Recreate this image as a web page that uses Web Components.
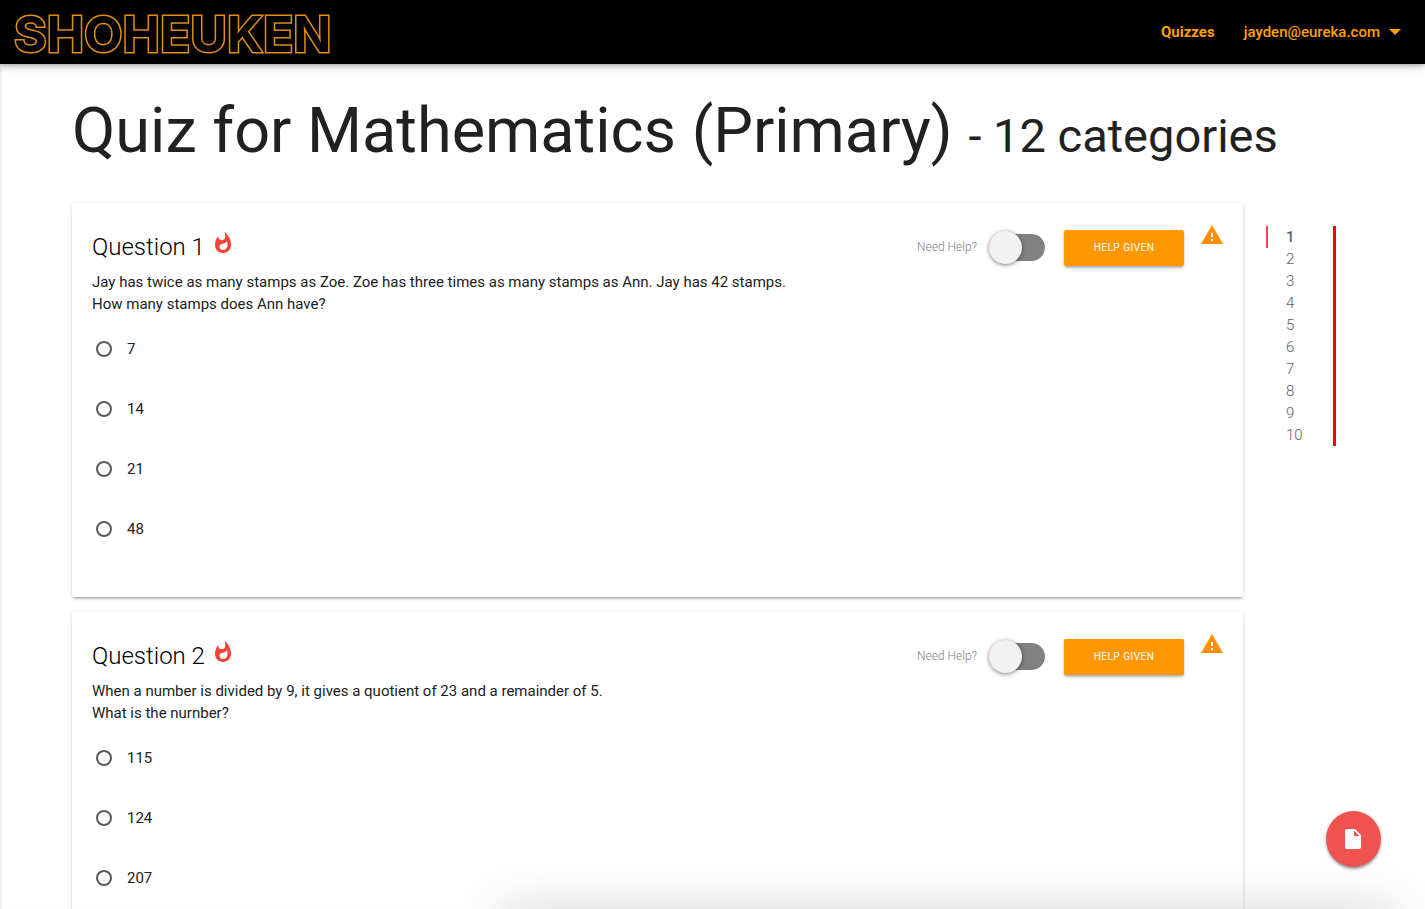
<!DOCTYPE html>
<html lang="en">
<head>
<meta charset="utf-8">
<meta name="viewport" content="width=device-width, initial-scale=1">
<title>Quiz for Mathematics (Primary)</title>
<style>
  html { font-family: Roboto, "Liberation Sans", sans-serif; font-size: 15px; line-height: 22px; color: #212121; background: #fff; }
  body { margin: 0; overflow-x: hidden; }
</style>
</head>
<body>
<quiz-header user="jayden@eureka.com"></quiz-header>
<quiz-page>
  <span slot="title">Quiz for Mathematics (Primary)</span>
  <span slot="note">- 12 categories</span>
  <quiz-question number="1" options="7,14,21,48">Jay has twice as many stamps as Zoe. Zoe has three times as many stamps as Ann. Jay has 42 stamps.<br>How many stamps does Ann have?</quiz-question>
  <quiz-question number="2" options="115,124,207">When a number is divided by 9, it gives a quotient of 23 and a remainder of 5.<br>What is the nurnber?</quiz-question>
  <quiz-contents slot="aside" count="10" active="1"></quiz-contents>
</quiz-page>
<window-shade></window-shade>
<floating-action label="Submit quiz"></floating-action>

<script>
const define = (name, html, setup) => {
  const template = document.createElement('template');
  template.innerHTML = html;
  customElements.define(name, class extends HTMLElement {
    constructor() {
      super();
      this.attachShadow({ mode: 'open' }).append(template.content.cloneNode(true));
    }
    connectedCallback() {
      if (setup && !this.ready) { this.ready = true; setup(this, this.shadowRoot); }
    }
  });
};

define('quiz-header', `
  <style>
    :host { display: block; position: relative; background: #000; color: #ffa000; box-shadow: 0 2px 5px rgba(0,0,0,.26), 0 2px 10px rgba(0,0,0,.12); }
    header { display: flex; align-items: center; justify-content: space-between; height: 64px; padding: 0 24px 0 14px; }
    a { color: inherit; text-decoration: none; }
    .logo { font: 700 50px/64px Inter, sans-serif; color: #000; -webkit-text-stroke: 3px #e08e0b; paint-order: stroke fill; padding-top: 4px; }
    nav { display: flex; align-items: center; gap: 29px; }
    .current { font-weight: 700; }
    .user { display: flex; align-items: center; gap: 9px; font-weight: 500; }
    svg { display: block; width: 12px; height: 6px; }
  </style>
  <header>
    <a class="logo" href="#">SHOHEUKEN</a>
    <nav>
      <a class="current" href="#">Quizzes</a>
      <a class="user" href="#"><span></span><svg viewBox="0 0 12 6" aria-hidden="true"><path d="M0 0h12L6 6z" fill="currentColor"/></svg></a>
    </nav>
  </header>`, (el, root) => { root.querySelector('.user span').textContent = el.getAttribute('user'); });

define('quiz-page', `
  <style>
    :host { display: block; padding: 0 72px; }
    h1 { margin: 32px 0; font-size: 63px; line-height: 70px; font-weight: 400; white-space: nowrap; }
    small { font-size: 47px; }
    .body { display: grid; grid-template-columns: minmax(0, 1fr) 87px; gap: 23px; align-items: start; }
    main { display: flex; flex-direction: column; gap: 15px; }
  </style>
  <h1><slot name="title"></slot> <small><slot name="note"></slot></small></h1>
  <div class="body">
    <main><slot></slot></main>
    <slot name="aside"></slot>
  </div>`);

define('quiz-question', `
  <style>
    :host { display: block; border-radius: 2px; background: #fff; padding: 20px 19px 38px 20px; box-shadow: 0 2px 2px rgba(0,0,0,.14), 0 1px 5px rgba(0,0,0,.12), 0 3px 2px -2px rgba(0,0,0,.16); }
    .top { display: flex; align-items: flex-start; height: 48px; }
    h2 { margin: 0 auto 0 0; display: flex; gap: 6px; font-size: 24px; line-height: 48px; font-weight: 300; color: #000; }
    svg { display: block; width: 24px; height: 24px; }
    .fire { margin-top: 8px; fill: #f44336; }
    .warn { fill: #ff8f00; }
    label.help { display: flex; align-items: center; gap: 12px; height: 48px; font-size: 12px; font-weight: 300; color: #808080; }
    .help input { appearance: none; display: flex; align-items: center; margin: 0; width: 56px; height: 27px; border-radius: 14px; background: linear-gradient(#818181, #818181) right / 40px 100% no-repeat; }
    .help input::before { content: ""; width: 33px; height: 33px; flex: none; border-radius: 50%; background: #f1f1f1; box-shadow: 0 1px 4px rgba(0,0,0,.5); }
    button { margin: 7px 16px 0 19px; border: 0; width: 120px; height: 36px; border-radius: 2px; padding: 0; background: #ff9800; color: #fff; font: 400 10px/36px Roboto, sans-serif; letter-spacing: .5px; text-transform: uppercase; box-shadow: 0 2px 2px rgba(0,0,0,.14), 0 1px 5px rgba(0,0,0,.12), 0 3px 3px -2px rgba(0,0,0,.2); }
    p { margin: 0 0 4px; }
    fieldset { margin: 0; border: 0; padding: 0; }
    .option { display: flex; align-items: center; gap: 15px; height: 60px; padding-left: 4px; }
    .option input { appearance: none; margin: 0; box-sizing: border-box; width: 16px; height: 16px; border: 2px solid #5a5a5a; border-radius: 50%; }
    .option input:checked { border-width: 5px; }
  </style>
  <div class="top">
    <h2><span></span><svg class="fire" viewBox="0 0 24 24" aria-hidden="true"><path d="M13.5.67s.74 2.65.74 4.8c0 2.06-1.35 3.73-3.41 3.73-2.07 0-3.63-1.67-3.63-3.73l.03-.36C5.21 7.51 4 10.62 4 14c0 4.42 3.58 8 8 8s8-3.58 8-8C20 8.61 17.41 3.8 13.5.67zM11.71 19c-1.78 0-3.22-1.4-3.22-3.14 0-1.62 1.05-2.76 2.81-3.12 1.77-.36 3.6-1.21 4.62-2.58.39 1.29.59 2.65.59 4.04 0 2.65-2.15 4.8-4.8 4.8z"/></svg></h2>
    <label class="help"><span>Need Help?</span><input type="checkbox" role="switch"></label>
    <button type="button">Help given</button>
    <svg class="warn" viewBox="0 0 24 24" aria-hidden="true"><path d="M1 21h22L12 2 1 21zm12-3h-2v-2h2v2zm0-4h-2v-4h2v4z"/></svg>
  </div>
  <p><slot></slot></p>
  <fieldset></fieldset>`, (el, root) => {
    const number = el.getAttribute('number');
    root.querySelector('h2 span').textContent = 'Question ' + number;
    const set = root.querySelector('fieldset');
    set.setAttribute('aria-label', 'Answers to question ' + number);
    for (const text of el.getAttribute('options').split(',')) {
      const label = document.createElement('label');
      label.className = 'option';
      const input = document.createElement('input');
      input.type = 'radio'; input.name = 'q' + number; input.value = text;
      label.append(input, text);
      set.append(label);
    }
  });

define('quiz-contents', `
  <style>
    :host { display: block; padding-top: 23px; }
    ul { list-style: none; margin: 0; padding: 0; width: 67px; border-right: 3px solid #f00; }
    a { display: block; padding-left: 20px; color: #606060; text-decoration: none; font-weight: 300; }
    a.active { padding-left: 18px; border-left: 2px solid #ea4a4f; font-weight: 500; }
  </style>
  <nav aria-label="Questions"><ul></ul></nav>`, (el, root) => {
    for (let i = 1; i <= Number(el.getAttribute('count')); i++) {
      const item = document.createElement('li');
      const link = document.createElement('a');
      link.href = '#question-' + i; link.textContent = i;
      link.classList.toggle('active', String(i) === el.getAttribute('active'));
      item.append(link);
      root.querySelector('ul').append(item);
    }
  });

define('floating-action', `
  <style>
    :host { position: fixed; right: 44px; bottom: 42px; }
    button { display: grid; place-items: center; width: 55px; height: 56px; border: 0; padding: 0 1px 1px 0; border-radius: 50%; background: #ef5350; box-shadow: 0 2px 2px rgba(0,0,0,.14), 0 1px 5px rgba(0,0,0,.2), 0 3px 3px -1px rgba(0,0,0,.2); }
    svg { width: 24px; height: 24px; fill: #fff; }
  </style>
  <button type="button"><svg viewBox="0 0 24 24" aria-hidden="true"><path d="M6 2c-1.1 0-1.99.9-1.99 2L4 20c0 1.1.89 2 1.99 2H18c1.1 0 2-.9 2-2V8l-6-6H6zm7 7V3.5L18.500 9H13z"/></svg></button>`,
  (el, root) => { root.querySelector('button').setAttribute('aria-label', el.getAttribute('label')); });

define('window-shade', `
  <style>
    :host { position: fixed; left: 0; right: 0; top: 64px; bottom: 0; overflow: hidden; pointer-events: none; box-shadow: inset 3px 0 3px -2px rgba(0,0,0,.12); }
    div { position: absolute; left: 35%; right: 2%; top: 100%; height: 80px; box-shadow: 0 0 48px rgba(0,0,0,.17); }
  </style>
  <div></div>`);
</script>
</body>
</html>
